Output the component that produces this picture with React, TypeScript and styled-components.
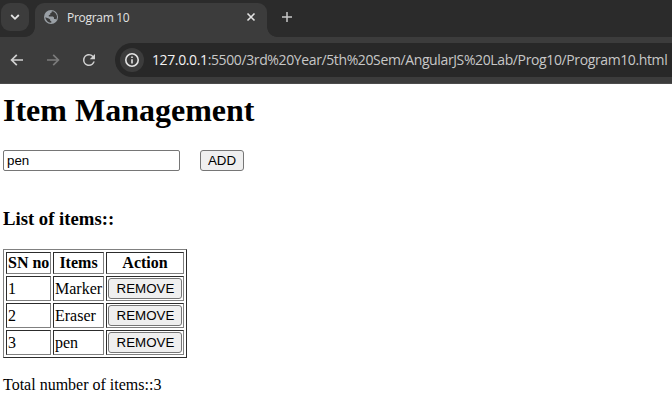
import React, { useState } from "react";
import styled, { createGlobalStyle } from "styled-components";

const GlobalStyle = createGlobalStyle`
  * { box-sizing: border-box; }
  html, body { margin: 0; background: #fff; overflow: hidden; }
`;

const Window = styled.div`
  width: 672px;
  height: 414px;
  overflow: hidden;
  background: #fff;
`;

const TabStrip = styled.div`
  display: flex;
  align-items: flex-start;
  height: 37px;
  padding: 3px 0 0 1px;
  background: #2b2b2b;
`;

const TabSearch = styled.button`
  display: grid;
  place-items: center;
  width: 28px;
  height: 28px;
  padding: 0;
  border: 0;
  border-radius: 9px;
  background: #3c3c3c;
`;

const Tab = styled.div`
  position: relative;
  display: flex;
  align-items: center;
  width: 232px;
  height: 34px;
  margin-left: 6px;
  padding: 0 11px 6px 9px;
  border-radius: 9px 9px 0 0;
  background: #3c3c3c;
  &::before,
  &::after {
    content: "";
    position: absolute;
    bottom: 0;
    width: 10px;
    height: 10px;
  }
  &::before {
    left: -10px;
    background: radial-gradient(circle at 0 0, transparent 9.5px, #3c3c3c 10.2px);
  }
  &::after {
    right: -10px;
    background: radial-gradient(circle at 100% 0, transparent 9.5px, #3c3c3c 10.2px);
  }
`;

const TabTitle = styled.span`
  flex: 1;
  margin-left: 9px;
  padding-top: 2px;
  color: #e3e3e3;
  font: 12px/18px "Open Sans", "Noto Sans", sans-serif;
  letter-spacing: -0.3px;
  white-space: nowrap;
`;

const NewTab = styled.span`
  display: flex;
  margin: 8px 0 0 14px;
`;

const Toolbar = styled.div`
  display: flex;
  align-items: center;
  height: 47px;
  padding: 0 0 0 8px;
  border-bottom: 1px solid #4b4b4b;
  background: #3c3c3c;
`;

const NavButtons = styled.div`
  display: flex;
  gap: 18px;
  width: 107px;
`;

const AddressBar = styled.div`
  display: flex;
  flex: 1;
  align-items: center;
  height: 34px;
  padding-left: 5px;
  border-radius: 17px 0 0 17px;
  background: #282828;
  overflow: hidden;
`;

const SiteInfo = styled.span`
  display: grid;
  place-items: center;
  flex: none;
  width: 24px;
  height: 24px;
  border-radius: 50%;
  background: #3c3c3c;
`;

const Url = styled.span`
  margin-left: 8px;
  color: #c7c7c7;
  font: 14px/20px "Open Sans", "Noto Sans", sans-serif;
  letter-spacing: -0.38px;
  white-space: nowrap;
`;

const Host = styled.span`
  color: #f2f2f2;
`;

const Page = styled.main`
  padding: 8px 3px 0;
  color: #000;
  font: 16px/18px "Liberation Serif", "Times New Roman", serif;
`;

const Title = styled.h1`
  margin: 0 0 21px;
  font-size: 32px;
  line-height: 37px;
`;

const Form = styled.div`
  display: flex;
  gap: 20px;
  height: 21px;
`;

const TextField = styled.input`
  width: 177px;
  height: 21px;
  padding: 1px 2px 1px 3px;
  border: 1px solid #767676;
  border-radius: 2px;
  outline: none;
  background: #fff;
  color: #000;
  font: 13.333px "Liberation Sans", Arial, sans-serif;
`;

const Button = styled.button<{ $width: number }>`
  display: block;
  width: ${(p) => p.$width}px;
  height: 21px;
  padding: 0;
  border: 1px solid #767676;
  border-radius: 3px;
  background: #efefef;
  color: #000;
  font: 13.333px/17px "Liberation Sans", Arial, sans-serif;
`;

const ListHeading = styled.h3`
  margin: 37px 0 19px;
  font-size: 18.72px;
  line-height: 22px;
`;

const Table = styled.table`
  width: 184px;
  table-layout: fixed;
  border: 1px solid;
  border-color: #808080 #2c2c2c #2c2c2c #808080;
  border-collapse: separate;
  border-spacing: 2px;
`;

const cellBorder = `
  border: 1px solid;
  border-color: #2c2c2c #808080 #808080 #2c2c2c;
  padding: 1px;
`;

const HeadCell = styled.th<{ $width: number }>`
  ${cellBorder}
  width: ${(p) => p.$width}px;
  height: 22px;
  white-space: nowrap;
`;

const Cell = styled.td`
  ${cellBorder}
  height: 25px;
  white-space: nowrap;
`;

const RemoveButton = styled(Button)`
  padding-left: 1px;
`;

const Total = styled.p`
  margin: 18px 0 0;
`;

const ChevronIcon = () => (
  <svg width="10" height="8" viewBox="0 0 10 8" fill="none" strokeWidth="1.8" stroke="#e3e3e3">
    <path d="M1.2 2 5 5.8 8.8 2" />
  </svg>
);

const GlobeIcon = () => (
  <svg width="14" height="14" viewBox="0 0 14 14">
    <circle cx="7" cy="7" r="7" fill="#9aa0a6" />
    <path
      d="M7.8 1.2 7.7 2.6 6.3 3.2 6.2 4.7 4.8 5v1.5h4.1l1.1 1v1.6h1.5l.8.7A6 6 0 0 0 9.5 1.6ZM1.3 7.2l3.4 1.2 1.5 1.2v1.2l1.1.5v1.5A6 6 0 0 1 1.3 7.2Z"
      fill="#3c3c3c"
    />
  </svg>
);

const CloseIcon = () => (
  <svg width="10" height="10" viewBox="0 0 10 10" fill="none" stroke="#e3e3e3" strokeWidth="1.6">
    <path d="m1.5 1.5 7 7m0-7-7 7" />
  </svg>
);

const PlusIcon = () => (
  <svg width="12" height="12" viewBox="0 0 12 12" fill="none" stroke="#c7c7c7" strokeWidth="1.5">
    <path d="M6 1v10M1 6h10" />
  </svg>
);

const ArrowIcon = ({ forward = false }: { forward?: boolean }) => (
  <svg width="18" height="18" viewBox="0 0 18 18" fill="none" stroke={forward ? "#7b7b7b" : "#d0d0d0"} strokeWidth="1.7">
    <path d={forward ? "M3 9h11M9.2 3.8 14.4 9l-5.2 5.2" : "M15 9H4m4.8-5.2L3.6 9l5.2 5.2"} />
  </svg>
);

const ReloadIcon = () => (
  <svg width="18" height="18" viewBox="0 0 24 24" fill="#d0d0d0">
    <path d="M17.65 6.35A7.96 7.96 0 0 0 12 4c-4.42 0-8 3.58-8 8s3.58 8 8 8c3.73 0 6.84-2.55 7.73-6h-2.08A6 6 0 1 1 12 6c1.66 0 3.14.69 4.22 1.78L13 11h7V4z" />
  </svg>
);

const InfoIcon = () => (
  <svg width="16" height="16" viewBox="0 0 16 16" fill="none" stroke="#e3e3e3" strokeWidth="1.6">
    <circle cx="8" cy="8" r="6.2" />
    <path d="M8 7.2v4.2M8 4.5v1.6" />
  </svg>
);

export default function App() {
  const [items, setItems] = useState(["Marker", "Eraser", "pen"]);
  const [draft, setDraft] = useState("pen");

  return (
    <Window>
      <GlobalStyle />
      <TabStrip>
        <TabSearch aria-label="Search tabs"><ChevronIcon /></TabSearch>
        <Tab>
          <GlobeIcon />
          <TabTitle>Program 10</TabTitle>
          <CloseIcon />
        </Tab>
        <NewTab><PlusIcon /></NewTab>
      </TabStrip>
      <Toolbar>
        <NavButtons>
          <ArrowIcon />
          <ArrowIcon forward />
          <ReloadIcon />
        </NavButtons>
        <AddressBar>
          <SiteInfo><InfoIcon /></SiteInfo>
          <Url>
            <Host>127.0.0.1</Host>:5500/3rd%20Year/5th%20Sem/AngularJS%20Lab/Prog10/Program10.html
          </Url>
        </AddressBar>
      </Toolbar>
      <Page>
        <Title>Item Management</Title>
        <Form>
          <TextField value={draft} onChange={(e) => setDraft(e.target.value)} />
          <Button $width={44} onClick={() => setItems([...items, draft])}>ADD</Button>
        </Form>
        <ListHeading>List of items::</ListHeading>
        <Table>
          <thead>
            <tr>
              <HeadCell $width={45}>SN no</HeadCell>
              <HeadCell $width={51}>Items</HeadCell>
              <HeadCell $width={78}>Action</HeadCell>
            </tr>
          </thead>
          <tbody>
            {items.map((item, i) => (
              <tr key={i}>
                <Cell>{i + 1}</Cell>
                <Cell>{item}</Cell>
                <Cell>
                  <RemoveButton $width={74} onClick={() => setItems(items.filter((_, n) => n !== i))}>
                    REMOVE
                  </RemoveButton>
                </Cell>
              </tr>
            ))}
          </tbody>
        </Table>
        <Total>Total number of items::{items.length}</Total>
      </Page>
    </Window>
  );
}
